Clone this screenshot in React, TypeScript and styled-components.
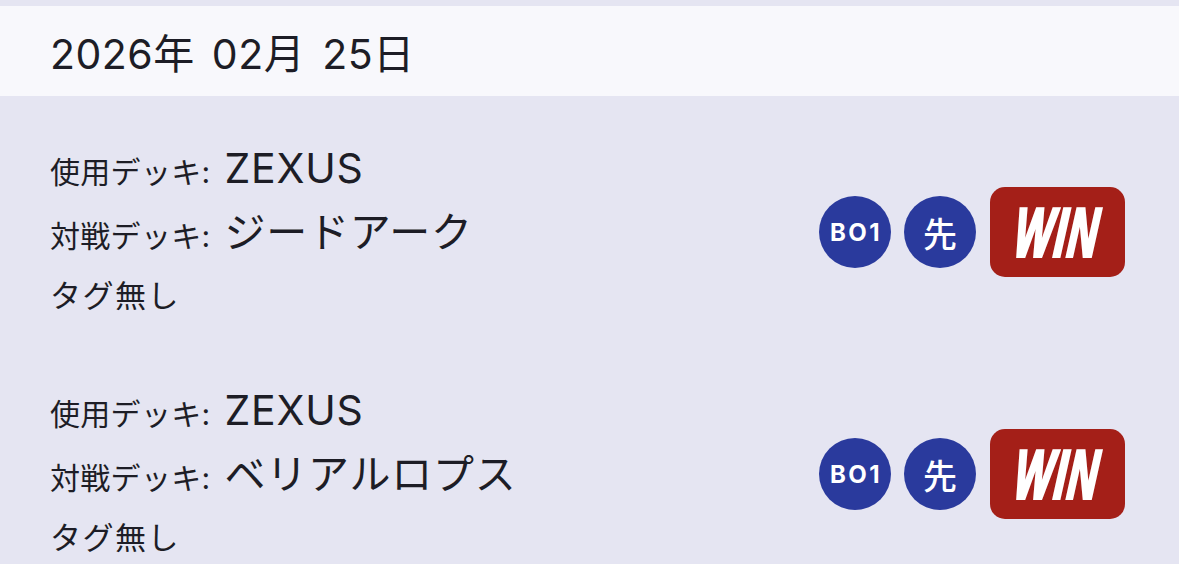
import React from 'react';
import styled, { createGlobalStyle } from 'styled-components';

const GlobalStyle = createGlobalStyle`
  html, body {
    margin: 0;
    padding: 0;
    background: #e5e5f2;
  }
  body {
    font-family: Inter, "Noto Sans CJK JP", sans-serif;
    color: #1d1d26;
  }
`;

const Page = styled.div`
  width: 1179px;
  height: 564px;
  overflow: hidden;
  background: #e5e5f2;
  padding-top: 6px;
  box-sizing: border-box;
`;

const DateHeader = styled.div`
  height: 90px;
  background: #f8f8fc;
  display: flex;
  align-items: center;
  padding-left: 50px;
  font-size: 41px;
  font-weight: 400;
  letter-spacing: 0.5px;
  word-spacing: 5px;
`;

const MatchList = styled.div`
  padding-top: 15px;
`;

const MatchRow = styled.div`
  display: flex;
  align-items: center;
  justify-content: space-between;
  padding: 25px 54px 25px 50px;
`;

const Info = styled.div`
  display: flex;
  flex-direction: column;
`;

const Line = styled.div`
  height: 64px;
  line-height: 64px;
  white-space: nowrap;
`;

const Label = styled.span`
  font-size: 30px;
  letter-spacing: 0.3px;
`;

const Tag = styled.span`
  font-size: 31px;
  letter-spacing: 1.5px;
`;

const Value = styled.span`
  font-size: 41px;
  margin-left: 14px;
  letter-spacing: 0.8px;
`;

const Badges = styled.div`
  display: flex;
  align-items: center;
  gap: 13px;
`;

const Circle = styled.div<{ $small?: boolean }>`
  width: 72px;
  height: 72px;
  border-radius: 50%;
  background: #2a3a9d;
  color: #fff;
  display: flex;
  align-items: center;
  justify-content: center;
  font-size: ${(p) => (p.$small ? '24px' : '34px')};
  font-weight: ${(p) => (p.$small ? 700 : 500)};
  letter-spacing: ${(p) => (p.$small ? '2.5px' : '0')};
  padding-left: ${(p) => (p.$small ? '2px' : '0')};
  box-sizing: border-box;
`;

const ResultBox = styled.div`
  width: 135px;
  height: 90px;
  border-radius: 15px;
  background: #a41f18;
  display: flex;
  align-items: center;
  justify-content: center;
  margin-left: 1px;
`;

const ResultText = styled.span`
  font-family: "Liberation Sans", Arial, sans-serif;
  font-weight: 700;
  font-style: italic;
  font-size: 68px;
  line-height: 1;
  color: #fff;
  -webkit-text-stroke: 4px #fff;
  display: inline-block;
  transform: scaleX(0.6) skewX(-10deg);
  letter-spacing: 3px;
`;

const matches = [
  { mine: 'ZEXUS', opponent: 'ジードアーク', tag: 'タグ無し' },
  { mine: 'ZEXUS', opponent: 'ベリアルロプス', tag: 'タグ無し' },
];

export default function App() {
  return (
    <Page>
      <GlobalStyle />
      <DateHeader>2026年 02月 25日</DateHeader>
      <MatchList>
        {matches.map((m, i) => (
          <MatchRow key={i}>
            <Info>
              <Line>
                <Label>使用デッキ:</Label>
                <Value>{m.mine}</Value>
              </Line>
              <Line>
                <Label>対戦デッキ:</Label>
                <Value>{m.opponent}</Value>
              </Line>
              <Line>
                <Tag>{m.tag}</Tag>
              </Line>
            </Info>
            <Badges>
              <Circle $small>BO1</Circle>
              <Circle>先</Circle>
              <ResultBox>
                <ResultText>WIN</ResultText>
              </ResultBox>
            </Badges>
          </MatchRow>
        ))}
      </MatchList>
    </Page>
  );
}
